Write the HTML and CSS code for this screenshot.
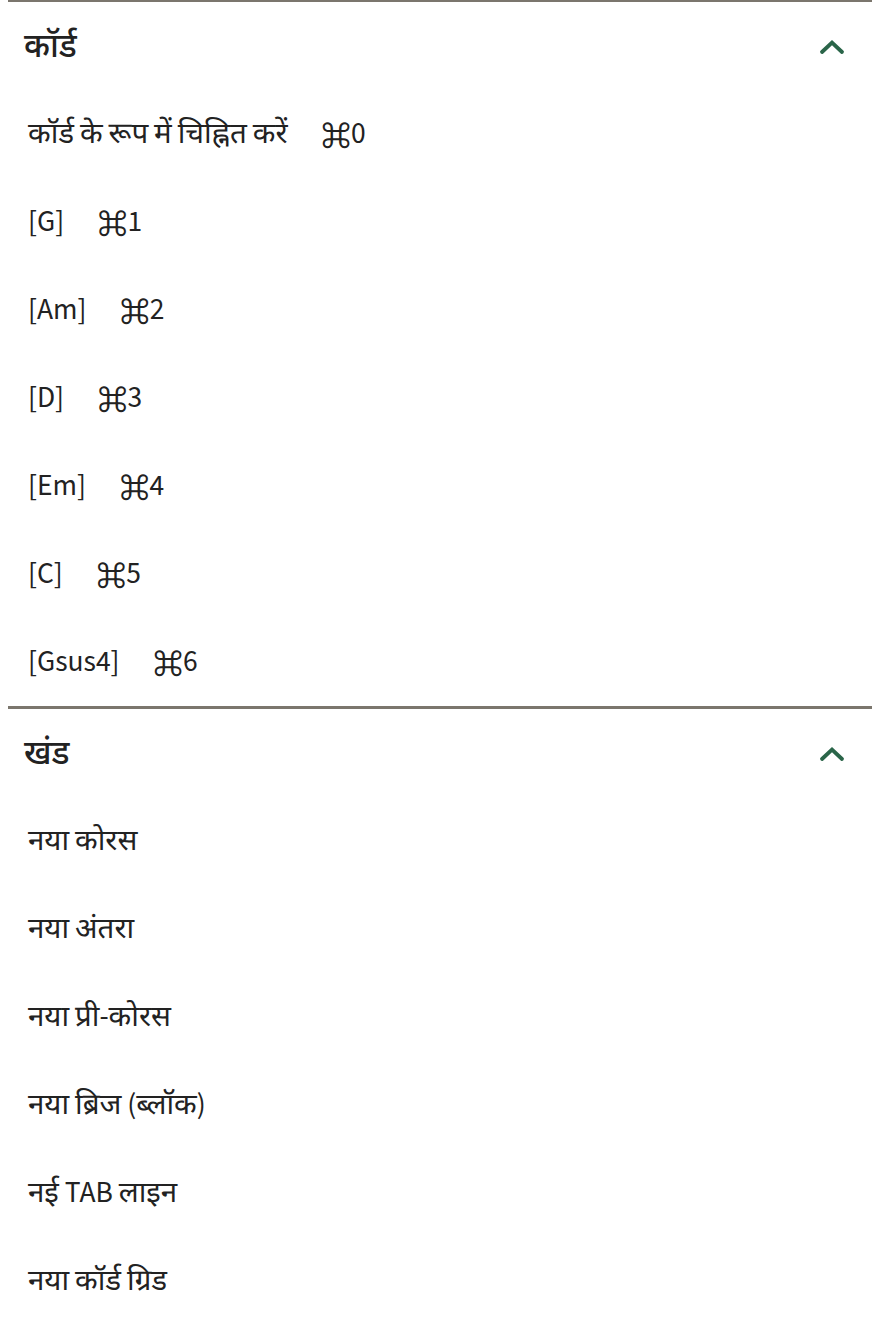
FILE: index.html
```html
<!DOCTYPE html>
<html lang="hi">
<head>
<meta charset="utf-8">
<link rel="stylesheet" href="styles.css">
</head>
<body>
<div class="menu">
  <section class="group">
    <div class="group-head">
      <h2 class="group-title">कॉर्ड</h2>
      <svg class="chevron" viewBox="0 0 26 17" width="26" height="17"><path d="M3 14 L13 4.5 L23 14" fill="none" stroke="currentColor" stroke-width="3.8" stroke-linecap="round" stroke-linejoin="miter"/></svg>
    </div>
    <ul class="items">
      <li class="item"><span class="label">कॉर्ड के रूप में चिह्नित करें</span><span class="key">⌘0</span></li>
      <li class="item"><span class="label">[G]</span><span class="key">⌘1</span></li>
      <li class="item"><span class="label">[Am]</span><span class="key">⌘2</span></li>
      <li class="item"><span class="label">[D]</span><span class="key">⌘3</span></li>
      <li class="item"><span class="label">[Em]</span><span class="key">⌘4</span></li>
      <li class="item"><span class="label">[C]</span><span class="key">⌘5</span></li>
      <li class="item"><span class="label">[Gsus4]</span><span class="key">⌘6</span></li>
    </ul>
  </section>
  <section class="group">
    <div class="group-head">
      <h2 class="group-title">खंड</h2>
      <svg class="chevron" viewBox="0 0 26 17" width="26" height="17"><path d="M3 14 L13 4.5 L23 14" fill="none" stroke="currentColor" stroke-width="3.8" stroke-linecap="round" stroke-linejoin="miter"/></svg>
    </div>
    <ul class="items">
      <li class="item"><span class="label">नया कोरस</span></li>
      <li class="item"><span class="label">नया अंतरा</span></li>
      <li class="item"><span class="label">नया प्री-कोरस</span></li>
      <li class="item"><span class="label">नया ब्रिज (ब्लॉक)</span></li>
      <li class="item"><span class="label">नई TAB लाइन</span></li>
      <li class="item"><span class="label">नया कॉर्ड ग्रिड</span></li>
    </ul>
  </section>
</div>
</body>
</html>
```

FILE: styles.css
```css
html, body {
  margin: 0;
  padding: 0;
  background: #ffffff;
}
body {
  padding: 0 8px;
  font-family: "Source Sans Pro", "Source Sans 3", "Noto Sans Devanagari", "Noto Sans", sans-serif;
  color: #222222;
}
.menu {
  margin-top: -1px;
}
.group {
  border-top: 3px solid #7b766d;
}
.group-head {
  display: flex;
  align-items: center;
  justify-content: space-between;
  height: 88px;
  padding: 0 27px 0 16px;
}
.group-title {
  margin: 0;
  font-size: 33px;
  font-weight: 500;
  line-height: 1;
}
.chevron {
  color: #2a6549;
  display: block;
}
.items {
  list-style: none;
  margin: 0;
  padding: 0;
}
.item {
  display: flex;
  align-items: center;
  height: 88px;
  padding-left: 20px;
  font-size: 29.5px;
}
.key {
  margin-left: 34px;
}
```
